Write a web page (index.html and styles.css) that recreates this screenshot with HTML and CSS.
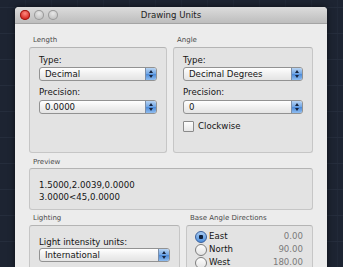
FILE: index.html
```html
<!DOCTYPE html>
<html lang="en-US">

<head>
  <meta charset="utf-8" />
  <title>Drawing Units</title>
  <link rel="stylesheet" href="styles.css">
</head>

<body>
  <div class="window">
    <header class="titlebar">
      <div class="lights">
        <span class="light red"></span>
        <span class="light"></span>
        <span class="light"></span>
      </div>
      <div class="title">Drawing Units</div>
    </header>

    <main class="content">
      <div class="row top">
        <section class="group">
          <div class="group-label">Length</div>
          <div class="box tall">
            <div class="field-label">Type:</div>
            <div class="popup"><span>Decimal</span><span class="arrows"></span></div>
            <div class="field-label gap">Precision:</div>
            <div class="popup"><span>0.0000</span><span class="arrows"></span></div>
          </div>
        </section>
        <section class="group">
          <div class="group-label">Angle</div>
          <div class="box tall">
            <div class="field-label">Type:</div>
            <div class="popup"><span>Decimal Degrees</span><span class="arrows"></span></div>
            <div class="field-label gap">Precision:</div>
            <div class="popup"><span>0</span><span class="arrows"></span></div>
            <label class="check"><span class="checkbox"></span>Clockwise</label>
          </div>
        </section>
      </div>

      <section class="group preview">
        <div class="group-label">Preview</div>
        <div class="box preview-box">
          <div>1.5000,2.0039,0.0000</div>
          <div>3.0000&lt;45,0.0000</div>
        </div>
      </section>

      <div class="row bottom">
        <section class="group">
          <div class="group-label">Lighting</div>
          <div class="box lighting">
            <div class="field-label">Light intensity units:</div>
            <div class="popup"><span>International</span><span class="arrows"></span></div>
          </div>
        </section>
        <section class="group">
          <div class="group-label">Base Angle Directions</div>
          <div class="box directions">
            <div class="dir"><span class="radio on"></span><span class="dir-name">East</span><span class="dir-value">0.00</span></div>
            <div class="dir"><span class="radio"></span><span class="dir-name">North</span><span class="dir-value">90.00</span></div>
            <div class="dir"><span class="radio"></span><span class="dir-name">West</span><span class="dir-value">180.00</span></div>
          </div>
        </section>
      </div>
    </main>
  </div>
</body>

</html>
```

FILE: styles.css
```css
html,
body {
  margin: 0;
  height: 100%;
  overflow: hidden;
}

body {
  background-color: #1d2432;
  background-image:
    repeating-linear-gradient(0deg, transparent 0 25px, #252d3c 25px 26px),
    repeating-linear-gradient(90deg, transparent 0 25px, #212938 25px 26px);
  font-family: "DejaVu Sans", sans-serif;
  font-size: 8.6px;
  color: #141414;
  padding: 7px 0 0 15px;
  box-sizing: border-box;
}

.window {
  width: 312px;
  height: 262px;
  background: #ececec;
  border-radius: 4px 4px 0 0;
  box-shadow: 0 0 6px rgba(0, 0, 0, 0.6);
  overflow: hidden;
}

.titlebar {
  height: 16px;
  display: flex;
  align-items: center;
  position: relative;
  background: linear-gradient(#dcdcdc, #bdbdbd);
  border-bottom: 1px solid #a4a4a4;
}

.lights {
  display: flex;
  gap: 4px;
  padding-left: 5px;
}

.light {
  width: 10px;
  height: 10px;
  border-radius: 50%;
  background: radial-gradient(circle at 50% 35%, #e8e8e8, #aeaeae);
  box-shadow: inset 0 0 0 1px #9a9a9a;
}

.light.red {
  background: radial-gradient(circle at 50% 35%, #ff8b80, #d3201a 70%);
  box-shadow: inset 0 0 0 1px #9b1b14;
}

.title {
  position: absolute;
  left: 0;
  right: 0;
  text-align: center;
  color: #222;
}

.content {
  padding: 11px 14px 0 14px;
}

.row {
  display: flex;
  gap: 6px;
}

.row.top .group {
  flex: 1;
}

.row.top .group:first-child {
  flex: 0 0 138px;
}

.row.bottom .group:first-child {
  flex: 0 0 151px;
}

.row.bottom .group:last-child {
  flex: 1;
}

.group-label {
  font-size: 7px;
  line-height: 10px;
  color: #4a4a4a;
  padding-left: 4px;
  margin-bottom: 2px;
}

.box {
  box-sizing: border-box;
  background: #e3e3e3;
  border: 1px solid #c6c6c6;
  border-top-color: #b4b4b4;
  border-radius: 3px;
  padding: 6px 9px 0 9px;
}

.box.tall {
  height: 106px;
}

.field-label {
  line-height: 12px;
  margin-bottom: 1px;
}

.field-label.gap {
  margin-top: 5px;
  margin-bottom: 2px;
}

.popup {
  display: flex;
  align-items: center;
  height: 14px;
  box-sizing: border-box;
  border: 1px solid #929292;
  border-radius: 3px;
  background: linear-gradient(#ffffff, #f0f0f0 50%, #e4e4e4);
  padding-left: 5px;
  overflow: hidden;
}

.popup span:first-child {
  flex: 1;
}

.arrows {
  align-self: stretch;
  width: 10px;
  background: linear-gradient(#b8d4f3, #6ea4e4 50%, #4c8ad8 51%, #8ebcef);
  border-left: 1px solid #7b8ea8;
  position: relative;
}

.arrows::before,
.arrows::after {
  content: "";
  position: absolute;
  left: 3px;
  border-left: 2px solid transparent;
  border-right: 2px solid transparent;
}

.arrows::before {
  top: 2px;
  border-bottom: 3px solid #16243e;
}

.arrows::after {
  bottom: 2px;
  border-top: 3px solid #16243e;
}

.check {
  display: flex;
  align-items: center;
  gap: 4px;
  margin-top: 6px;
  line-height: 12px;
}

.checkbox {
  width: 9px;
  height: 9px;
  border: 1px solid #8a8a8a;
  border-radius: 1px;
  background: linear-gradient(#fdfdfd, #e6e6e6);
}

.preview {
  margin-top: 4px;
}

.preview .group-label {
  margin-bottom: 1px;
}

.preview-box {
  height: 42px;
  padding-top: 10px;
  line-height: 12px;
}

.row.bottom {
  margin-top: 3px;
}

.lighting {
  height: 60px;
  padding-top: 10px;
}

.lighting .field-label {
  margin-bottom: 0;
}

.directions {
  height: 60px;
  padding-top: 4px;
}

.dir {
  display: flex;
  align-items: center;
  line-height: 13px;
}

.radio {
  width: 10px;
  height: 10px;
  border-radius: 50%;
  border: 1px solid #7d7d7d;
  background: linear-gradient(#fdfdfd, #e3e3e3);
  margin-right: 2px;
  margin-left: -1px;
}

.radio.on {
  border-color: #3a5f9a;
  background: radial-gradient(circle, #10203a 0 2px, transparent 2.5px), linear-gradient(#a7cbf2, #4e8fdc);
}

.dir-name {
  flex: 1;
}

.dir-value {
  color: #7a7a7a;
}
```
